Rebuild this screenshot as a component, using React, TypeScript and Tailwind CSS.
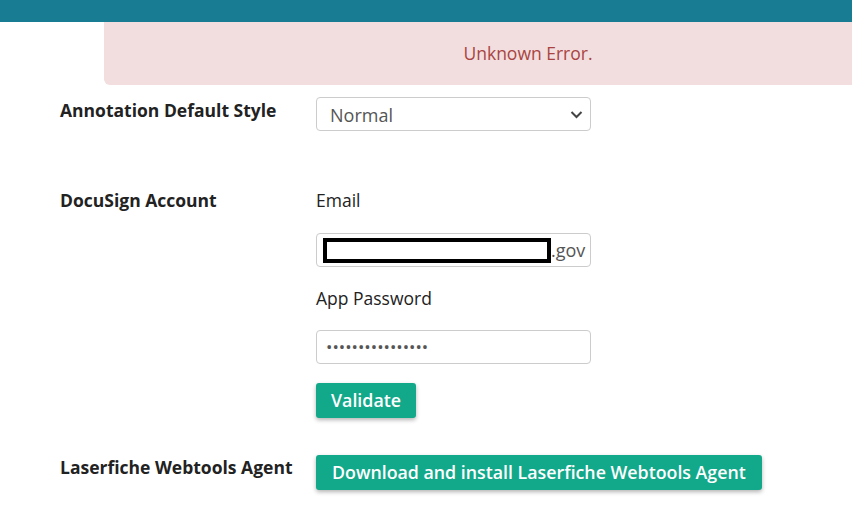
import React from 'react';

const Label = ({ children }: { children: React.ReactNode }) => (
  <div className="w-[256px] shrink-0 text-[17.5px] leading-6 font-bold text-[#222]">{children}</div>
);

const App = () => {
  return (
    <div
      className="min-h-[511px] w-[852px] overflow-hidden bg-white"
      style={{ fontFamily: '"Open Sans", "Noto Sans", sans-serif' }}
    >
      <div className="h-[22px] bg-[#187d92]" />

      <div className="ml-[104px] flex h-[63px] w-[848px] items-center justify-center rounded-b-md bg-[#f2dede] text-[17.5px] text-[#a94442]">
        Unknown Error.
      </div>

      <div className="pl-[60px]">
        <div className="mt-[12px] flex items-start">
          <div className="pt-px">
            <Label>Annotation Default Style</Label>
          </div>
          <div className="relative h-[34px] w-[275px] rounded border border-[#ccc] bg-white">
            <div className="pl-[13px] text-[18px] leading-[34px] text-[#555]">Normal</div>
            <svg className="absolute right-[7px] top-[12px]" width="13" height="9" viewBox="0 0 13 9">
              <path d="M1.5 2 L6.5 7 L11.5 2" fill="none" stroke="#444" strokeWidth="2" />
            </svg>
          </div>
        </div>

        <div className="mt-[57px] flex items-start">
          <Label>DocuSign Account</Label>
          <div className="flex flex-col">
            <div className="text-[17.5px] leading-6 text-[#222]">Email</div>
            <div className="mt-[21px] flex h-[34px] w-[275px] items-center rounded border border-[#ccc] bg-white pl-[6px]">
              <div className="h-[25px] w-[228px] border-[4px] border-black bg-white" />
              <span className="text-[18px] text-[#555]">.gov</span>
            </div>
            <div className="mt-[19px] text-[17.5px] leading-6 text-[#222]">App Password</div>
            <div className="mt-[20px] flex h-[34px] w-[275px] items-center rounded border border-[#ccc] bg-white pl-[9px]">
              <span className="text-[17px] text-[#555]">••••••••••••••••</span>
            </div>
            <div className="mt-[19px]">
              <button className="h-[35px] rounded-[3px] bg-[#12a88a] px-[15px] text-[17.8px] font-semibold text-white shadow-[0_2px_4px_rgba(0,0,0,0.3)]">
                Validate
              </button>
            </div>
          </div>
        </div>

        <div className="mt-[37px] flex items-start">
          <Label>Laserfiche Webtools Agent</Label>
          <button className="h-[35px] rounded-[3px] bg-[#12a88a] px-[16px] text-[17.8px] font-semibold text-white shadow-[0_2px_4px_rgba(0,0,0,0.3)]">
            Download and install Laserfiche Webtools Agent
          </button>
        </div>
      </div>
    </div>
  );
};

export default App;
